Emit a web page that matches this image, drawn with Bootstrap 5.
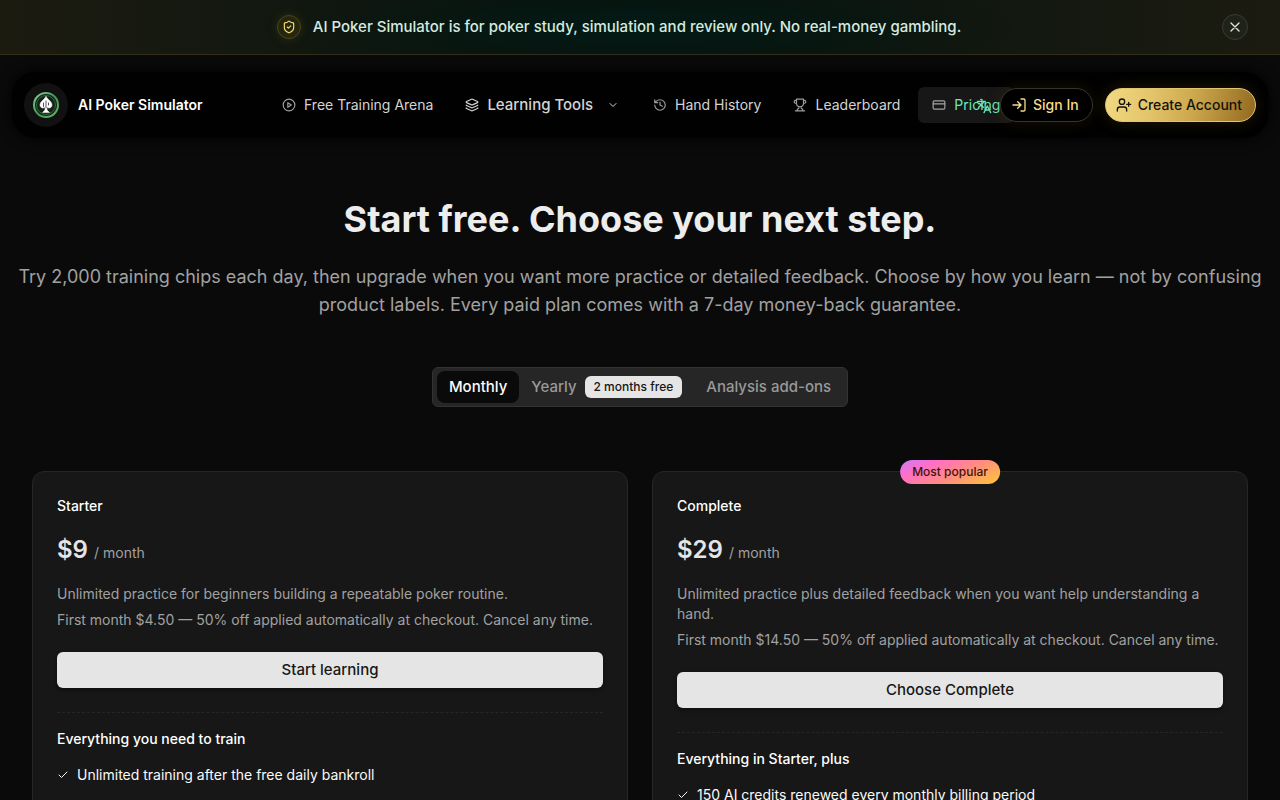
<!DOCTYPE html>
<html lang="en" data-bs-theme="dark">
<head>
<meta charset="utf-8">
<meta name="viewport" content="width=device-width, initial-scale=1">
<title>Pricing – AI Poker Simulator</title>
<link href="https://cdn.jsdelivr.net/npm/bootstrap@5.3.0/dist/css/bootstrap.min.css" rel="stylesheet">
<style>
body{font-family:Inter,"Liberation Sans",sans-serif;font-size:14px;line-height:20px;background:#0a0a0a;color:#fafafa}
svg{fill:none;stroke:currentColor;stroke-width:2;stroke-linecap:round;stroke-linejoin:round;flex:none}
.notice{min-height:55px;gap:16px;padding:0 32px 1px;background:radial-gradient(ellipse 30% 90% at 50% 50%,#041b16 0%,#04181280 55%,transparent 100%),linear-gradient(90deg,#1c1b10 0%,#131810 20%,#08120e 45%,#08120e 55%,#131810 80%,#1c1b10 100%);border-bottom:1px solid #322e1c;color:#d6eadf}
.notice-body{gap:12px}
.notice-text{font-size:15px}
.shield{width:24px;height:24px;border:1px solid #4a4518;background:#25260f;color:#f5dc6a;box-shadow:0 0 10px #5c4a0f66}
.notice .dismiss{width:26px;height:26px;background:#1e2219;border:1px solid #393c33;color:#dfe3da}
.topbar{margin:17px 12px 0;padding:0 12px;height:66px;background:#010101;border-radius:24px;box-shadow:0 0 14px #000}
.logo{width:44px;height:44px;background:#111}
.brand{width:244px;gap:10px;color:#fff;font-weight:600}
.mainnav{gap:4px;min-width:0}
.mainnav a,.mainnav button{display:flex;align-items:center;gap:8px;padding:8px 14px;border:0;border-radius:6px;background:none;color:#d4d4d4;white-space:nowrap;text-decoration:none}
.mainnav svg{opacity:.75}
.mainnav .stack,.mainnav .chev{opacity:1}
.mainnav button{font-size:15px;font-weight:500;padding-right:16px}
.mainnav .chev{margin-left:6px}
.mainnav a.active{background:#171717;color:#6ee7b7}
.mainnav a.active svg{color:#d4d4d4}
.tools{gap:12px}
.lang{border:0;background:none;color:#6ee7b7;padding:0;width:16px;margin-right:-4px}
.pill{height:34px;border-radius:17px;padding:0 13px 0 10px;gap:6px;font-weight:500;font-size:14px;white-space:nowrap;line-height:20px}
.signin{color:#f5dc8b;background:#000;border:1px solid #37352b;box-shadow:0 0 16px #4d3b0d55}
.create{color:#17120a;background:linear-gradient(100deg,#f2d983 0%,#e3c56b 30%,#cba54b 60%,#916a20 100%);border:1px solid #e2c56f;box-shadow:0 0 16px #6b501855}
.hero{padding-top:57px}
.hero h1{font-size:36px;line-height:40px;font-weight:700;color:#ededed;margin-bottom:24px;padding-top:4px}
.hero .intro{font-size:18px;line-height:28px;color:#a1a1a1;margin:0 -15px}
.switcher{margin-top:48px;padding:3px 4px;background:#262626;border:1px solid #333;border-radius:6px}
.switcher button{height:32px;border:0;border-radius:8px;background:none;color:#999;font-size:15px;font-weight:500;padding:0 12px;gap:8px;white-space:nowrap}
.switcher button.active{background:#0a0a0a;color:#fafafa}
.save{background:#e5e5e5;color:#171717;font-size:12px;line-height:16px;padding:3px 9px;border-radius:6px}
.plans{margin-top:64px;--bs-gutter-x:24px}
.plan{background:#171717;border:1px solid #262626;border-radius:12px;padding:24px;height:100%}
.plan h2{font-size:14px;line-height:20px;font-weight:500;margin:0}
.cost{margin:18px 0 15px;font-size:24px;line-height:32px;font-weight:600;color:#e5e5e5}
.cost span{font-size:14px;font-weight:400;color:#a1a1a1}
.plan p{color:#a1a1a1;margin-bottom:6px}
.choose{height:36px;border:0;border-radius:6px;background:#e5e5e5;color:#171717;font-size:15px;font-weight:500;margin-top:16px;box-shadow:0 2px 4px #0006}
.choose:hover{background:#d4d4d4;color:#171717}
.plan hr{margin:24px 0 16px;border-top:1px dashed #262626;opacity:1}
.plan ul{margin:16px 0 0}
.plan li{gap:8px}
.popular{top:-12px;left:50%;transform:translateX(-50%);height:24px;line-height:24px;padding:0 12px;border-radius:12px;background:linear-gradient(155deg,#c77dff 0%,#ff6ec7 25%,#ff8f7d 60%,#ffc933 100%);color:#431407;font-size:12px;font-weight:500;white-space:nowrap}
</style>
</head>
<body>
<div class="notice d-flex align-items-center">
  <div class="notice-body d-flex align-items-center mx-auto">
    <span class="shield rounded-circle d-flex align-items-center justify-content-center"><svg width="14" height="14" viewBox="0 0 24 24"><path d="M20 13c0 5-3.500 7.500-7.660 8.950a1 1 0 0 1-.67-.01C7.500 20.500 4 18 4 13V6a1 1 0 0 1 1-1c2 0 4.500-1.200 6.240-2.720a1.170 1.170 0 0 1 1.520 0C14.510 3.810 17 5 19 5a1 1 0 0 1 1 1z"/><path d="m9 12 2 2 4-4"/></svg></span>
    <span class="fw-medium notice-text">AI Poker Simulator is for poker study, simulation and review only. No real-money gambling.</span>
  </div>
  <button class="dismiss rounded-circle p-0 d-flex align-items-center justify-content-center" aria-label="Dismiss"><svg width="16" height="16" viewBox="0 0 24 24"><path d="M18 6 6 18M6 6l12 12"/></svg></button>
</div>
<header class="topbar d-flex align-items-center">
  <a href="#" class="brand d-flex align-items-center flex-shrink-0 text-decoration-none">
    <span class="logo rounded-circle d-flex align-items-center justify-content-center"><svg width="28" height="28" viewBox="0 0 28 28"><defs><linearGradient id="ring" x1="0" y1="0" x2="1" y2="1"><stop offset="0" stop-color="#8bd09a"/><stop offset=".5" stop-color="#469554"/><stop offset="1" stop-color="#64b96c"/></linearGradient></defs><circle cx="14" cy="14" r="12" fill="#122318" stroke="url(#ring)" stroke-width="2"/><circle cx="14" cy="14" r="9.500" stroke="#2f6b3c" stroke-width="1"/><path d="M14 5.500c1.500 3 6 5 6 8.500 0 2.800-3.200 4-5 2v3l2.500 2.500h-7L13 19v-3c-1.800 2-5 .8-5-2 0-3.500 4.500-5.500 6-8.500z" fill="#fff" stroke="#fff" stroke-width=".5"/><path d="M14 10v7M11.500 12v3.500M16.500 12v2" stroke="#555" stroke-width="1"/></svg></span>
    <span>AI Poker Simulator</span>
  </a>
  <nav class="mainnav d-flex align-items-center flex-grow-1">
    <a href="#"><svg width="14" height="14" viewBox="0 0 24 24"><circle cx="12" cy="12" r="10"/><path d="m10 8 6 4-6 4z"/></svg>Free Training Arena</a>
    <button type="button"><svg class="stack" width="14" height="14" viewBox="0 0 24 24"><path d="M12.830 2.180a2 2 0 0 0-1.660 0L2.600 6.080a1 1 0 0 0 0 1.830l8.580 3.910a2 2 0 0 0 1.660 0l8.580-3.900a1 1 0 0 0 0-1.830zM2 12a1 1 0 0 0 .58.910l8.600 3.910a2 2 0 0 0 1.650 0l8.580-3.900A1 1 0 0 0 22 12M2 17a1 1 0 0 0 .58.910l8.600 3.910a2 2 0 0 0 1.650 0l8.580-3.900A1 1 0 0 0 22 17"/></svg>Learning Tools<svg class="chev" width="12" height="12" viewBox="0 0 24 24"><path d="m6 9 6 6 6-6"/></svg></button>
    <a href="#"><svg width="14" height="14" viewBox="0 0 24 24"><path d="M3 12a9 9 0 1 0 9-9 9.750 9.750 0 0 0-6.740 2.740L3 8M3 3v5h5M12 7v5l4 2"/></svg>Hand History</a>
    <a href="#"><svg width="14" height="14" viewBox="0 0 24 24"><path d="M6 9H4.500a2.500 2.500 0 0 1 0-5H6M18 9h1.500a2.500 2.500 0 0 0 0-5H18M4 22h16M10 14.660V17c0 .550-.47.980-.97 1.210C7.850 18.750 7 20.240 7 22M14 14.660V17c0 .550.47.980.97 1.210C16.150 18.750 17 20.240 17 22M18 2H6v7a6 6 0 0 0 12 0z"/></svg>Leaderboard</a>
    <a href="#" class="active"><svg width="14" height="14" viewBox="0 0 24 24"><rect x="2" y="5" width="20" height="14" rx="2"/><path d="M2 10h20"/></svg>Pricing</a>
  </nav>
  <div class="tools d-flex align-items-center flex-shrink-0 position-relative">
    <button class="lang" aria-label="Language"><svg width="16" height="16" viewBox="0 0 24 24"><path d="m5 8 6 6M4 14l6-6 2-3M2 5h12M7 2h1M22 22l-5-10-5 10M14 18h6"/></svg></button>
    <button class="pill signin d-flex align-items-center"><svg width="16" height="16" viewBox="0 0 24 24"><path d="M15 3h4a2 2 0 0 1 2 2v14a2 2 0 0 1-2 2h-4M10 17l5-5-5-5M15 12H3"/></svg>Sign In</button>
    <button class="pill create d-flex align-items-center"><svg width="16" height="16" viewBox="0 0 24 24"><path d="M16 21v-2a4 4 0 0 0-4-4H6a4 4 0 0 0-4 4v2M19 8v6M22 11h-6"/><circle cx="9" cy="7" r="4"/></svg>Create Account</button>
  </div>
</header>
<main class="hero container-fluid px-4">
  <div class="px-2">
  <div class="text-center">
    <h1>Start free. Choose your next step.</h1>
    <p class="intro">Try 2,000 training chips each day, then upgrade when you want more practice or detailed feedback. Choose by how you learn — not by confusing product labels. Every paid plan comes with a 7-day money-back guarantee.</p>
    <div class="switcher d-inline-flex align-items-center" role="tablist">
      <button class="active" role="tab" aria-selected="true">Monthly</button>
      <button class="d-flex align-items-center" role="tab">Yearly <span class="save">2 months free</span></button>
      <button role="tab">Analysis add-ons</button>
    </div>
  </div>
  <div class="row row-cols-2 plans">
    <div class="col"><section class="plan">
      <h2>Starter</h2>
      <div class="cost">$9 <span>/ month</span></div>
      <p>Unlimited practice for beginners building a repeatable poker routine.</p>
      <p>First month $4.50 — 50% off applied automatically at checkout. Cancel any time.</p>
      <button class="choose btn w-100 py-0">Start learning</button>
      <hr>
      <h2>Everything you need to train</h2>
      <ul class="list-unstyled"><li class="d-flex align-items-center"><svg width="12" height="12" viewBox="0 0 24 24"><path d="M20 6 9 17l-5-5"/></svg>Unlimited training after the free daily bankroll</li></ul>
    </section></div>
    <div class="col"><section class="plan position-relative">
      <span class="popular position-absolute">Most popular</span>
      <h2>Complete</h2>
      <div class="cost">$29 <span>/ month</span></div>
      <p>Unlimited practice plus detailed feedback when you want help understanding a hand.</p>
      <p>First month $14.50 — 50% off applied automatically at checkout. Cancel any time.</p>
      <button class="choose btn w-100 py-0">Choose Complete</button>
      <hr>
      <h2>Everything in Starter, plus</h2>
      <ul class="list-unstyled"><li class="d-flex align-items-center"><svg width="12" height="12" viewBox="0 0 24 24"><path d="M20 6 9 17l-5-5"/></svg>150 AI credits renewed every monthly billing period</li></ul>
    </section></div>
  </div>
  </div>
</main>
<script src="https://cdn.jsdelivr.net/npm/bootstrap@5.3.0/dist/js/bootstrap.bundle.min.js"></script>
</body>
</html>
